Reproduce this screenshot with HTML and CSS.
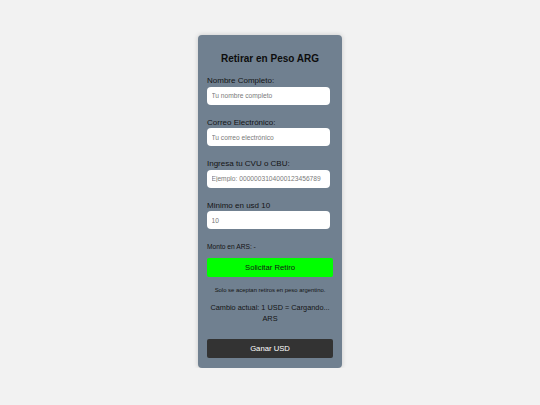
FILE: index.html
```html
<!DOCTYPE html>
<html lang="es">
<head>
<meta charset="utf-8">
<title>Retirar en Peso ARG</title>
<link rel="stylesheet" href="styles.css">
</head>
<body>
<main class="page">
  <form class="card">
    <h2 class="title">Retirar en Peso ARG</h2>
    <label class="label" for="nombre">Nombre Completo:</label>
    <input class="field" id="nombre" type="text" placeholder="Tu nombre completo">
    <label class="label" for="correo">Correo Electrónico:</label>
    <input class="field" id="correo" type="email" placeholder="Tu correo electrónico">
    <label class="label" for="cbu">Ingresa tu CVU o CBU:</label>
    <input class="field" id="cbu" type="text" placeholder="Ejemplo: 0000003104000123456789">
    <label class="label" for="monto">Minimo en usd 10</label>
    <input class="field field-value" id="monto" type="number" value="10">
    <p class="monto">Monto en ARS: -</p>
    <button class="btn btn-green" type="button">Solicitar Retiro</button>
    <p class="note">Solo se aceptan retiros en peso argentino.</p>
    <p class="rate">Cambio actual: 1 USD = Cargando... ARS</p>
    <button class="btn btn-dark" type="button">Ganar USD</button>
  </form>
</main>
</body>
</html>
```
FILE: styles.css
```css
html, body {
  margin: 0;
  padding: 0;
  background: #f2f2f2;
  font-family: "Liberation Sans", Arial, sans-serif;
}

.page {
  display: flex;
  justify-content: center;
  padding-top: 35px;
}

.card {
  box-sizing: border-box;
  width: 144px;
  padding: 17.5px 9px 9.5px;
  background: #708090;
  border-radius: 4px;
  box-shadow: 0 0 5px rgba(0, 0, 0, 0.18);
  display: flex;
  flex-direction: column;
}

.title {
  margin: 0 0 12px;
  font-size: 10px;
  line-height: 11.5px;
  font-weight: bold;
  text-align: center;
  color: #0d0d0d;
}

.label {
  display: block;
  font-size: 8px;
  line-height: 9px;
  color: #141414;
  margin-bottom: 1.5px;
}

.field {
  box-sizing: border-box;
  width: 123px;
  height: 18px;
  margin: 0 0 13px;
  padding: 0 4.5px;
  border: none;
  border-radius: 4px;
  background: #fff;
  font-family: "Liberation Sans", Arial, sans-serif;
  font-size: 6.67px;
  color: #777;
  outline: none;
}

.field::placeholder {
  color: #7a7a7a;
}

.field-value {
  -moz-appearance: textfield;
}

.field-value::-webkit-outer-spin-button,
.field-value::-webkit-inner-spin-button {
  -webkit-appearance: none;
  margin: 0;
}

.monto {
  margin: 0.8px 0 7.5px;
  font-size: 6.67px;
  line-height: 8px;
  color: #141414;
}

.btn {
  box-sizing: border-box;
  width: 126px;
  height: 19px;
  padding: 0;
  border: none;
  border-radius: 2px;
  font-family: "Liberation Sans", Arial, sans-serif;
  font-size: 7.7px;
}

.btn-green {
  background: #00ff00;
  color: #141414;
}

.btn-dark {
  background: #333;
  color: #fff;
}

.note {
  margin: 10.2px 0 8px;
  font-size: 5.9px;
  line-height: 7px;
  text-align: center;
  color: #141414;
}

.rate {
  margin: 0 0 14.6px;
  font-size: 7.33px;
  line-height: 11px;
  text-align: center;
  color: #141414;
}
```
